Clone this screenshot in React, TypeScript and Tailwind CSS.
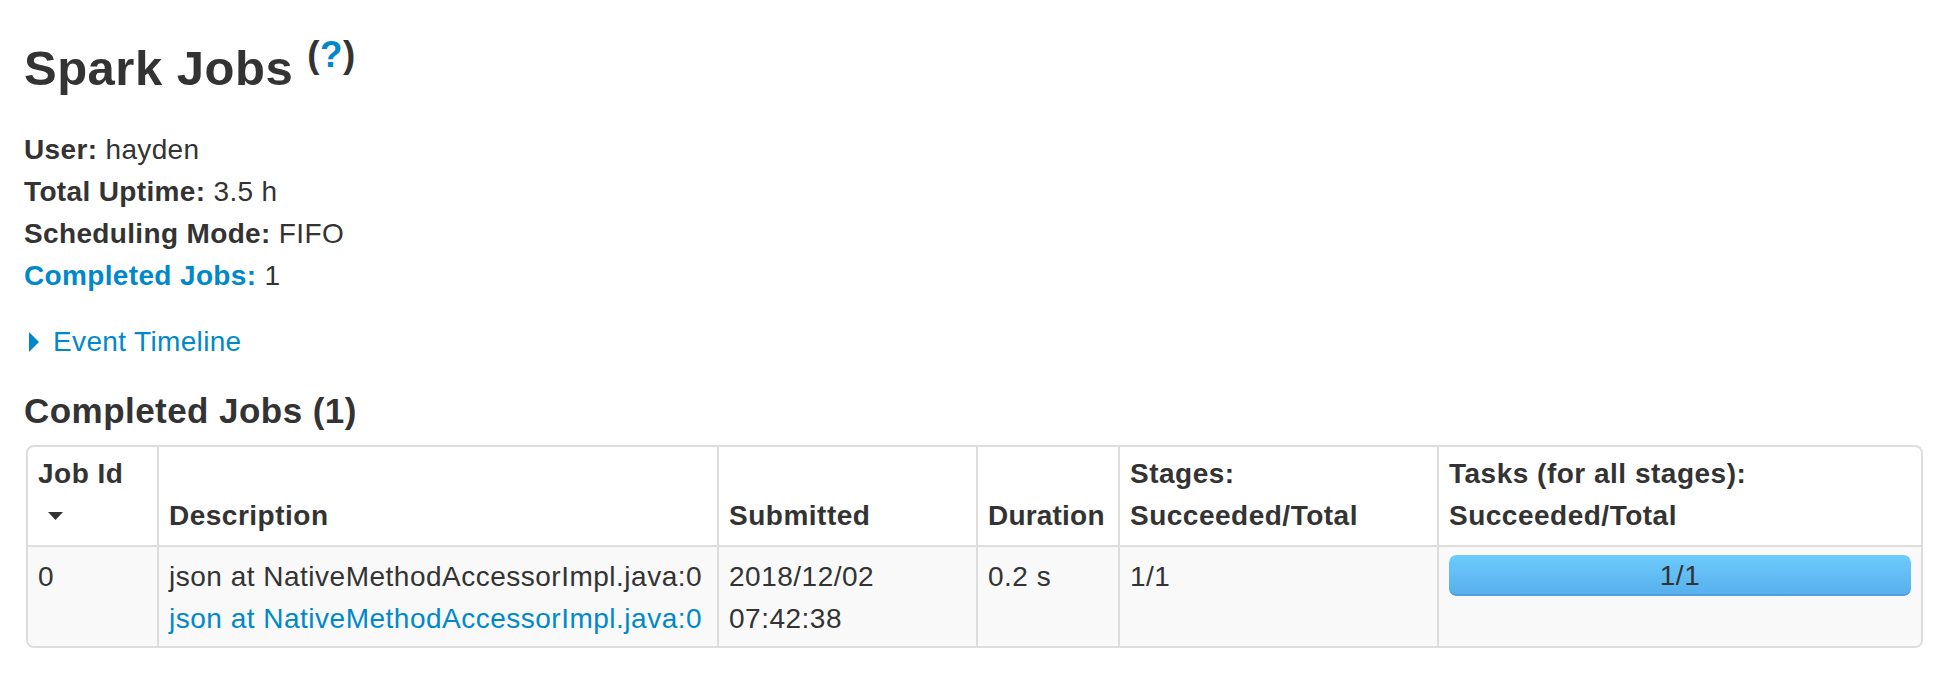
import React from 'react';

const rows = [
  {
    id: '0',
    description: 'json at NativeMethodAccessorImpl.java:0',
    link: 'json at NativeMethodAccessorImpl.java:0',
    submitted: '2018/12/02 07:42:38',
    duration: '0.2 s',
    stages: '1/1',
    tasks: { done: 1, total: 1 },
  },
];

function SortArrow() {
  return (
    <svg width="15" height="8" viewBox="0 0 15 8" className="ml-[10px] block">
      <path d="M0 0h15L7.5 8z" fill="#333" />
    </svg>
  );
}

function ProgressBar({ done, total }: { done: number; total: number }) {
  const pct = total > 0 ? (done / total) * 100 : 0;
  return (
    <div className="relative h-[41px] w-full overflow-hidden rounded-[7px] bg-[#f2f2f2]">
      <div
        className="h-full rounded-[7px] border-b-2 border-[#4f9fd9] bg-linear-to-b from-[#6dcbfd] to-[#57b0ec]"
        style={{ width: `${pct}%` }}
      />
      <span className="absolute inset-0 flex items-center justify-center text-[#333]">
        {done}/{total}
      </span>
    </div>
  );
}

export default function App() {
  const th = 'px-[10px] pt-[6px] pb-[8px] text-left align-bottom font-bold';
  const td = 'px-[10px] pt-[9px] pb-[6px] align-top border-t-2 border-[#ddd] bg-[#f9f9f9]';

  return (
    <div className="bg-white pl-[24px] pt-[28px] pb-[40px] font-['Liberation_Sans',Arial,sans-serif] text-[28px] leading-[42px] tracking-[0.35px] text-[#333]">
      <h3 className="text-[49px] leading-[80px] font-bold tracking-[0.5px]">
        Spark Jobs{' '}
        <sup>
          (<a className="text-[#0088cc]">?</a>)
        </sup>
      </h3>

      <ul className="mt-[21px]">
        <li>
          <strong>User:</strong> hayden
        </li>
        <li>
          <strong>Total Uptime:</strong> 3.5 h
        </li>
        <li>
          <strong>Scheduling Mode:</strong> FIFO
        </li>
        <li>
          <a className="font-bold text-[#0088cc]">Completed Jobs:</a> 1
        </li>
      </ul>

      <div className="mt-[24px] flex items-center">
        <span className="ml-[5px] h-0 w-0 border-y-[10px] border-l-[10px] border-y-transparent border-l-[#0088cc]" />
        <a className="ml-[14px] text-[#0088cc]">Event Timeline</a>
      </div>

      <h4 className="mt-[28px] text-[35px] leading-[40px] font-bold tracking-[0.45px]">Completed Jobs (1)</h4>

      <table className="mt-[14px] ml-[2px] w-[1897px] table-fixed border-separate border-spacing-0 rounded-[8px] border-2 border-[#ddd] tracking-[0.5px]">
        <colgroup>
          <col className="w-[129px]" />
          <col className="w-[560px]" />
          <col className="w-[259px]" />
          <col className="w-[142px]" />
          <col className="w-[319px]" />
          <col className="w-[484px]" />
        </colgroup>
        <thead>
          <tr>
            <th className={th}>
              <a>Job Id</a>
              <div className="flex h-[42px] items-center">
                <SortArrow />
              </div>
            </th>
            <th className={`${th} border-l-2 border-[#ddd]`}>Description</th>
            <th className={`${th} border-l-2 border-[#ddd]`}>Submitted</th>
            <th className={`${th} border-l-2 border-[#ddd] tracking-[0.2px]`}>Duration</th>
            <th className={`${th} border-l-2 border-[#ddd]`}>
              Stages:
              <br />
              Succeeded/Total
            </th>
            <th className={`${th} border-l-2 border-[#ddd]`}>
              Tasks (for all stages):
              <br />
              Succeeded/Total
            </th>
          </tr>
        </thead>
        <tbody>
          {rows.map((r) => (
            <tr key={r.id}>
              <td className={`${td} rounded-bl-[6px]`}>{r.id}</td>
              <td className={`${td} border-l-2`}>
                <span className="block whitespace-nowrap">{r.description}</span>
                <a className="block whitespace-nowrap text-[#0088cc]">{r.link}</a>
              </td>
              <td className={`${td} border-l-2`}>{r.submitted}</td>
              <td className={`${td} border-l-2`}>{r.duration}</td>
              <td className={`${td} border-l-2`}>{r.stages}</td>
              <td className="rounded-br-[6px] border-t-2 border-l-2 border-[#ddd] bg-[#f9f9f9] px-[10px] pt-[8px] pb-[6px] align-top">
                <ProgressBar done={r.tasks.done} total={r.tasks.total} />
              </td>
            </tr>
          ))}
        </tbody>
      </table>
    </div>
  );
}
